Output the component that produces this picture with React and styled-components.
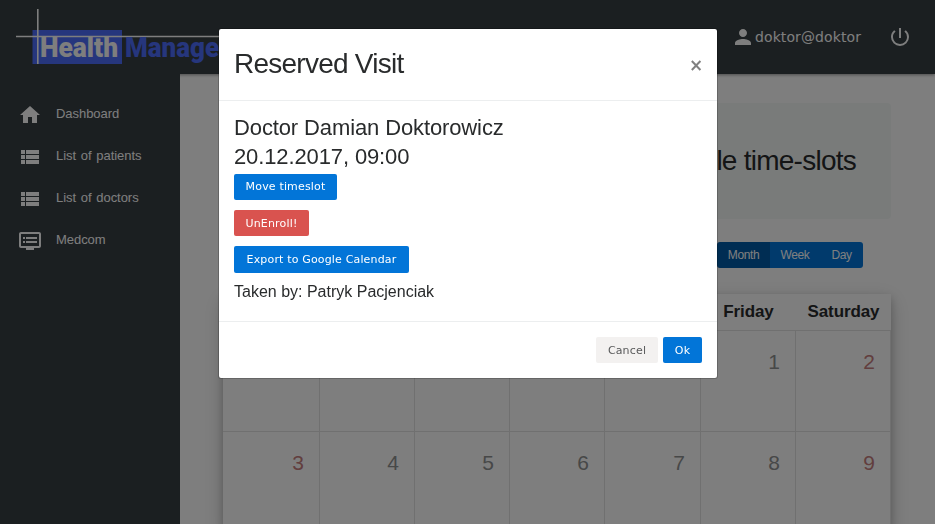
import React from "react";
import styled, { createGlobalStyle } from "styled-components";
import { MdHome, MdViewList, MdDvr, MdPerson, MdPowerSettingsNew } from "react-icons/md";

const sans = '"Liberation Sans", Arial, sans-serif';
const dejavu = '"DejaVu Sans", Verdana, sans-serif';

const GlobalStyle = createGlobalStyle`
  * { box-sizing: border-box; }
  body { margin: 0; background: #fdfdfd; color: #292b2c; font-family: ${sans}; overflow: hidden; }
  h2, h4, p { margin: 0; font-weight: 400; }
  button { border: 0; margin: 0; }
`;

const Page = styled.div`
  height: 524px;
  display: flex;
  flex-direction: column;
  overflow: hidden;
`;

const Header = styled.header`
  position: relative;
  z-index: 1;
  flex: none;
  height: 74px;
  display: flex;
  align-items: flex-start;
  justify-content: space-between;
  background: #363e42;
  box-shadow: 0 1px 3px rgba(0, 0, 0, 0.4);
`;

const Logo = styled.svg`
  display: block;
  width: 260px;
  height: 74px;
`;

const Account = styled.div`
  display: flex;
  align-items: center;
  height: 74px;
  padding-right: 23px;
  color: #fdfdfd;
  font: 14px/20px ${dejavu};
  letter-spacing: 0.1px;
  svg { display: block; width: 24px; height: 24px; }
`;

const UserName = styled.span`
  width: 133px;
`;

const Columns = styled.div`
  flex: 1;
  display: flex;
`;

const Sidebar = styled.nav`
  position: relative;
  z-index: 1;
  width: 180px;
  flex: none;
  padding-top: 19px;
  background: #363e42;
`;

const NavItem = styled.a`
  display: flex;
  align-items: center;
  gap: 14px;
  height: 42px;
  padding-left: 18px;
  color: #fdfdfd;
  font-size: 13px;
  letter-spacing: -0.05px;
  word-spacing: 1.2px;
  svg { width: 24px; height: 24px; margin-top: 2px; }
  span { padding-bottom: 1px; }
`;

const Content = styled.main`
  flex: 1;
  padding: 29px 44px 0 43px;
`;

const Jumbotron = styled.section`
  height: 116px;
  display: flex;
  align-items: center;
  justify-content: flex-end;
  padding-right: 35px;
  border-radius: 4px;
  background: #f3f7f5;
  font-size: 28px;
  letter-spacing: -0.75px;
`;

const ViewSwitch = styled.div`
  display: flex;
  justify-content: flex-end;
  margin: 23px 28px 26px 0;
`;

const ViewButton = styled.button`
  height: 26px;
  width: ${(p) => p.$width}px;
  padding: 0;
  background: ${(p) => (p.$active ? "#005aa6" : "#0275d8")};
  color: #fff;
  font: 12px ${sans};
  letter-spacing: -0.4px;
  &:first-child { border-radius: 3px 0 0 3px; }
  &:last-child { border-radius: 0 3px 3px 0; }
`;

const Calendar = styled.section`
  display: grid;
  grid-template-columns: 97px 95px 95px 95px 96px 95px 95px;
  grid-template-rows: 37px;
  grid-auto-rows: 101px;
  background: #fdfdfd;
  box-shadow: 0 4px 8px rgba(0, 0, 0, 0.2), 0 6px 20px rgba(0, 0, 0, 0.19);
`;

const Weekday = styled.div`
  display: flex;
  align-items: center;
  justify-content: center;
  border-bottom: 1px solid #e1e1e1;
  font-size: 17px;
  font-weight: 700;
  letter-spacing: -0.1px;
  padding-bottom: 1px;
`;

const DayCell = styled.div`
  padding: 19px 15px 0 0;
  border-right: 1px solid #e1e1e1;
  border-bottom: 1px solid #e1e1e1;
  text-align: right;
  font-size: 21px;
  line-height: 24px;
  color: ${(p) => (p.$weekend ? "#c47d7d" : "#8f9090")};
`;

const Backdrop = styled.div`
  position: fixed;
  inset: 0;
  z-index: 2;
  display: flex;
  align-items: flex-start;
  justify-content: center;
  padding: 28px 0 0 1px;
  background: rgba(0, 0, 0, 0.5);
`;

const Dialog = styled.div`
  width: 500px;
  height: 351px;
  display: flex;
  flex-direction: column;
  border: 1px solid rgba(0, 0, 0, 0.2);
  border-radius: 3px;
  background: #fff;
  background-clip: padding-box;
`;

const DialogHeader = styled.div`
  height: 72px;
  display: flex;
  align-items: center;
  justify-content: space-between;
  padding: 0 15px 1px;
  border-bottom: 1px solid #eceeef;
`;

const DialogTitle = styled.h2`
  font-size: 28px;
  letter-spacing: -0.75px;
`;

const Close = styled.button`
  width: 13px;
  padding: 2px 0 0;
  background: none;
  color: #808080;
  font: 700 17px/20px ${dejavu};
`;

const DialogBody = styled.div`
  flex: 1;
  display: flex;
  flex-direction: column;
  align-items: flex-start;
  padding: 12px 15px 0;
`;

const Detail = styled.h4`
  font-size: 22px;
  line-height: 29px;
  letter-spacing: -0.12px;
`;

const Actions = styled.div`
  display: flex;
  flex-direction: column;
  align-items: flex-start;
  gap: 10px;
  margin-top: 3px;
`;

const tones = {
  primary: ["#0275d8", "#fff"],
  danger: ["#d9534f", "#fff"],
  plain: ["#f3f1f0", "#58595a"],
};

const Button = styled.button`
  height: ${(p) => p.$height || 26}px;
  width: ${(p) => p.$width}px;
  padding: ${(p) => (p.$raised ? "0 0 1px" : "1px 0 0")};
  border-radius: 2px;
  background: ${(p) => tones[p.$tone][0]};
  color: ${(p) => tones[p.$tone][1]};
  font: 11px ${dejavu};
  letter-spacing: 0.16px;
  white-space: nowrap;
`;

const Patient = styled.p`
  margin-top: 7px;
  font-size: 16px;
  line-height: 24px;
`;

const DialogFooter = styled.div`
  height: 57px;
  display: flex;
  align-items: center;
  justify-content: flex-end;
  gap: 5px;
  padding: 0 15px;
  border-top: 1px solid #eceeef;
`;

const nav = [
  [MdHome, "Dashboard"],
  [MdViewList, "List of patients"],
  [MdViewList, "List of doctors"],
  [MdDvr, "Medcom"],
];
const weekdays = ["Sunday", "Monday", "Tuesday", "Wednesday", "Thursday", "Friday", "Saturday"];
const days = ["", "", "", "", "", 1, 2, 3, 4, 5, 6, 7, 8, 9];

export default function App() {
  return (
    <>
      <GlobalStyle />
      <Page>
        <Header>
          <Logo viewBox="0 0 260 74">
            <rect x="32.5" y="30" width="89.5" height="34" fill="#4c6cfa" />
            <path d="M37.8 9V64M16 36.5H260" stroke="#fdfdfd" strokeWidth="1.6" />
            <g fontFamily="Roboto" fontSize="27" fontWeight="900">
              <text x="40" y="57" fill="#fdfdfd" textLength="78" lengthAdjust="spacingAndGlyphs">Health</text>
              <text x="125" y="57" fill="#4c6cfa" textLength="104" lengthAdjust="spacingAndGlyphs">Manager</text>
            </g>
          </Logo>
          <Account>
            <MdPerson />
            <UserName>doktor@doktor</UserName>
            <MdPowerSettingsNew />
          </Account>
        </Header>
        <Columns>
          <Sidebar>
            {nav.map(([Icon, label]) => (
              <NavItem key={label}>
                <Icon />
                <span>{label}</span>
              </NavItem>
            ))}
          </Sidebar>
          <Content>
            <Jumbotron>Available time-slots</Jumbotron>
            <ViewSwitch>
              <ViewButton $width={53} $active>Month</ViewButton>
              <ViewButton $width={50}>Week</ViewButton>
              <ViewButton $width={43}>Day</ViewButton>
            </ViewSwitch>
            <Calendar>
              {weekdays.map((name) => <Weekday key={name}>{name}</Weekday>)}
              {days.map((day, i) => (
                <DayCell key={i} $weekend={i % 7 === 0 || i % 7 === 6}>{day}</DayCell>
              ))}
            </Calendar>
          </Content>
        </Columns>
      </Page>
      <Backdrop>
        <Dialog role="dialog">
          <DialogHeader>
            <DialogTitle>Reserved Visit</DialogTitle>
            <Close aria-label="Close">×</Close>
          </DialogHeader>
          <DialogBody>
            <Detail>Doctor Damian Doktorowicz</Detail>
            <Detail>20.12.2017, 09:00</Detail>
            <Actions>
              <Button $tone="primary" $width={103} $raised>Move timeslot</Button>
              <Button $tone="danger" $width={75}>UnEnroll!</Button>
              <Button $tone="primary" $width={175} $height={27} $raised>Export to Google Calendar</Button>
            </Actions>
            <Patient>Taken by: Patryk Pacjenciak</Patient>
          </DialogBody>
          <DialogFooter>
            <Button $tone="plain" $width={62}>Cancel</Button>
            <Button $tone="primary" $width={39}>Ok</Button>
          </DialogFooter>
        </Dialog>
      </Backdrop>
    </>
  );
}
